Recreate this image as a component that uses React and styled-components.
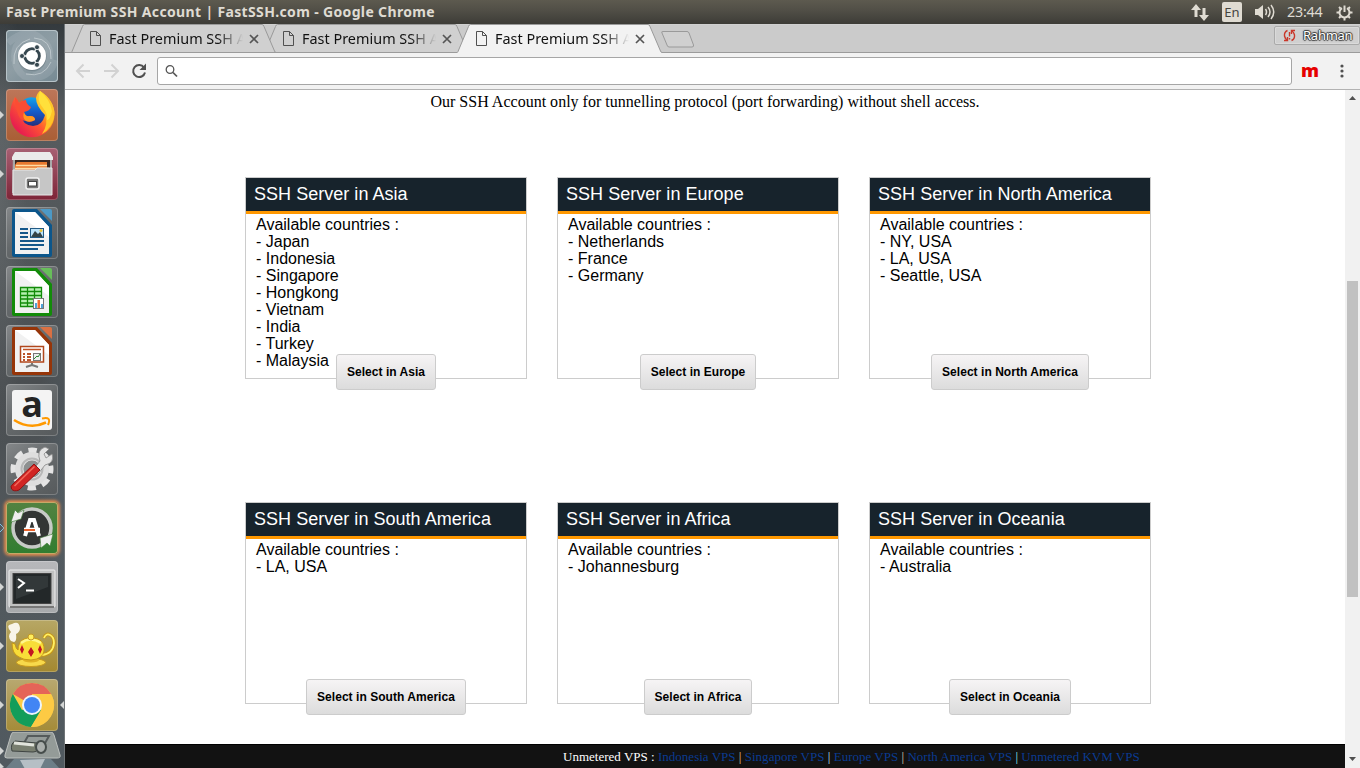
import React from 'react';
import styled, { createGlobalStyle } from 'styled-components';

const Global = createGlobalStyle`
  * { box-sizing: border-box; }
  body { margin: 0; overflow: hidden; background: #fff; }
`;
const Desktop = styled.div`
  width: 1360px; height: 768px; display: flex; flex-direction: column; overflow: hidden;
`;
const MenuBar = styled.header`
  height: 24px; flex: none; display: flex; align-items: center; padding: 0 7px 0 6px;
  background: linear-gradient(#5d5a4f, #504e46 45%, #3d3c37);
  color: #dfdbd2; font-family: "Noto Sans", sans-serif;
`;
const WindowTitle = styled.h1`
  margin: 0; flex: 1; font-size: 14px; line-height: 24px; font-weight: 700; white-space: nowrap;
  letter-spacing: ${p => p.$track}px;
`;
const Indicators = styled.div`display: flex; align-items: center;`;
const Lang = styled.span`
  width: 20px; height: 20px; margin: 0 13px 0 13px; border-radius: 2px; background: #dfdbd2; color: #45443f;
  font-size: 13px; line-height: 20px; text-align: center;
`;
const Clock = styled.span`
  width: 37px; margin: 0 12px 0 12px; font-size: 14.3px; line-height: 24px; white-space: nowrap; letter-spacing: -0.2px;
`;
const Body = styled.div`flex: 1; display: flex; min-height: 0;`;
const Launcher = styled.nav`
  width: 65px; flex: none; padding-top: 6px; display: flex; flex-direction: column; gap: 7px; overflow: hidden;
  border-right: 1px solid #6f7477;
  background:
    radial-gradient(ellipse at 0 25%, #777c7e55, transparent 30%),
    radial-gradient(ellipse at 100% 58%, #5c717f44, transparent 28%),
    linear-gradient(#343a3e, #575c5f 12%, #505558 34%, #494d50 50%, #52585c 67%, #515a60);
`;
const Slot = styled.div`
  display: grid; grid-template-columns: 6px 52px 6px; align-items: center; height: 52px; flex: none;
`;
const Tile = styled.div`
  width: 52px; height: 52px; border-radius: 4px; overflow: hidden; background: ${p => p.$bg};
  box-shadow: inset 0 0 0 1px ${p => p.$edge || '#ffffff38'}${p => p.$glow ? ', 0 0 3px 2px #d98a50' : ''};
  svg { display: block; }
`;
const Pip = styled.svg`display: block; width: 6px; height: 10px; justify-self: ${p => p.$end ? 'end' : 'start'};`;
const Folded = styled.svg`display: block; flex: none; margin-top: -6px;`;

const Browser = styled.main`flex: 1; min-width: 0; display: flex; flex-direction: column;`;
const TabStrip = styled.div`
  height: 29px; flex: none; display: flex; padding-left: 6px; background: #cbcbcb;
  box-shadow: inset 0 -1px #9b9b9b, inset 0 1px #d0d0d0;
`;
const TabBox = styled.div`
  position: relative; z-index: ${p => p.$z}; flex: none; width: 206px; height: 29px; margin-right: -13px;
  padding-left: 19px; display: flex; align-items: center;
`;
const TabShape = styled.svg`position: absolute; left: 0; top: 0; z-index: -1;`;
const TabTitle = styled.span`
  width: 134px; margin-left: 8px; overflow: hidden; white-space: nowrap; color: #111;
  font: 14.4px/28px "Noto Sans", sans-serif; letter-spacing: ${p => p.$track}px;
  mask-image: linear-gradient(90deg, #000 108px, transparent 134px);
`;
const CloseIcon = styled.svg`margin-left: 5px;`;
const NewTab = styled.svg`margin: 6px 0 0 10px; flex: none;`;
const Profile = styled.div`
  width: 86px; height: 19px; margin: 2px 0 0 auto; padding-left: 8px; display: flex; align-items: center; gap: 7px;
  border: 1px solid #aaa; border-radius: 2px; background: #d0d0d0; box-shadow: inset 0 0 0 1px #dadada;
`;
const ProfileName = styled.span`
  color: #fff; font: 13px/17px "Noto Sans", sans-serif; letter-spacing: -0.25px;
  text-shadow: 1px 0 1px #333, -1px 0 1px #333, 0 1px 1px #333, 0 -1px 1px #333;
`;
const Toolbar = styled.div`
  height: 37px; flex: none; display: flex; align-items: center; background: #f2f2f2; border-bottom: 1px solid #b2b2b2;
  padding-left: 10px;
`;
const Omnibox = styled.div`
  width: 1135px; height: 28px; margin-left: 8px; padding-left: 7px; display: flex; align-items: center;
  background: #fff; border: 1px solid #a6a6a6; border-radius: 3px;
`;
const Extension = styled.span`
  width: 18px; margin: 0 20px 2px 9px; color: #e60000; font: 900 18px/26px "Noto Sans", sans-serif; text-align: center;
`;
const Viewport = styled.div`flex: 1; min-height: 0; display: flex;`;
const Page = styled.div`flex: 1; display: flex; flex-direction: column; background: #fff;`;
const Intro = styled.p`
  margin: 0; padding: 3px 0 0; height: 87px; text-align: center; color: #000; font: 16px/18px "Liberation Serif", serif;
  letter-spacing: 0.01px;
`;
const Grid = styled.section`
  display: grid; grid-template-columns: repeat(3, 282px); grid-auto-rows: 202px; column-gap: 30px; row-gap: 123px;
  padding-left: 180px; flex: 1; font-family: "Liberation Sans", Arial, sans-serif;
`;
const Card = styled.article`
  border: 1px solid #ccc; display: flex; flex-direction: column; align-items: center; height: 202px;
`;
const CardTitle = styled.h2`
  align-self: stretch; flex: none; margin: 0; height: 36px; padding-left: 8px; background: #17232c;
  border-bottom: 3px solid #ff9800; color: #fff; font-size: 18px; font-weight: 400; line-height: 32px; letter-spacing: 0.03px;
`;
const Countries = styled.div`
  align-self: stretch; height: 140px; flex: none; padding: 2px 10px 0; font-size: 16px; line-height: 17px; color: #000;
`;
const SelectButton = styled.button`
  height: 36px; flex: none; padding: 0 10px; border: 1px solid #ccc; border-radius: 3px; position: relative;
  background: linear-gradient(#f6f4f5, #dcdcdc); color: #000; white-space: nowrap;
  font: bold 12px/34px "Liberation Sans", Arial, sans-serif; letter-spacing: 0.04px;
`;
const Footer = styled.footer`
  height: 24px; flex: none; padding: 0 0 0 498px; background: #121212; border-top: 1px solid #000;
  color: #fff; white-space: nowrap; font: 13px/23px "Liberation Serif", serif; letter-spacing: ${p => p.$track}px;
`;
const VpsLink = styled.a`color: #0b3b91;`;
const Divider = styled.span`color: ${p => p.$c};`;
const Scrollbar = styled.div`
  width: 15px; display: flex; flex-direction: column; align-items: center; background: #f1f1f1; padding: 6px 0 7px;
`;
const Thumb = styled.div`width: 11px; height: 316px; margin: 181px 0 auto; background: #c1c1c1;`;

const Pages = ({ color, dark, children }) => (
  <>
    <path d="M8 2H31L46 18V48Q46 50 44 50H8Q6 50 6 48V4Q6 2 8 2Z" fill={color} />
    <path d="M9 5H29L43 20V47H9Z" fill="#f1f1f1" /><path d="M9 5H29L43 20V30Z" fill="#fff" />
    <path d="M34 2H44Q46 2 46 4V14Z" fill={dark} opacity=".85" />
    {children}
  </>
);

const art = {
  ubuntu: <>
    <g fill="none" stroke="#d3dadd" strokeWidth="7" opacity=".16">
      <path d="M9 31Q6 7 28 8Q44 10 44 27Q43 43 27 46" /><path d="M2 13Q23-6 38 12M49 30Q43 52 18 46Q10 40 9 30" />
    </g>
    <g fill="none" stroke="#e4eaec" opacity=".5"><path d="M8 34Q6 14 24 9M28 8Q46 9 45 29M45 32Q38 48 20 44" /></g>
    <circle cx="26" cy="26.500" r="14.500" fill="#52626a" opacity=".35" />
    <circle cx="26" cy="26" r="14" fill="#fff" />
    <circle cx="26" cy="26" r="7.300" fill="none" stroke="#36474f" strokeWidth="3" />
    <g stroke="#fff" strokeWidth="1.300"><path d="M26 26L31 17M26 26L31 35M26 26H15" /></g>
    <circle cx="26" cy="26" r="5.700" fill="#fff" />
    <g fill="#36474f" stroke="#fff" strokeWidth=".8"><circle cx="16" cy="26" r="2.500" /><circle cx="31" cy="17.200" r="2.500" /><circle cx="31" cy="34.800" r="2.500" /></g>
  </>,
  firefox: <>
    <defs>
      <linearGradient id="ff1" x1=".85" y1=".1" x2=".15" y2=".8"><stop stopColor="#ffe02e" /><stop offset=".3" stopColor="#ffac17" /><stop offset=".6" stopColor="#ff5632" /><stop offset="1" stopColor="#e8204e" /></linearGradient>
      <linearGradient id="ff2" x1="0" y1="0" x2="0" y2="1"><stop stopColor="#14a4ea" /><stop offset=".5" stopColor="#145bcb" /><stop offset="1" stopColor="#24307c" /></linearGradient>
    </defs>
    <path d="M34 2Q48 11 48.500 25A22 22.500 0 0 1 4 26Q4 17 9 8Q12 11 13 14Q20 8 31 12Q30 6 34 2Z" fill="url(#ff1)" />
    <path d="M14 15Q20 6 30 9Q39 15 39 26Q36 37 27 37Q16 36 15 26Z" fill="url(#ff2)" />
    <path d="M9 8Q12 11 13 14Q16 11 20 11Q20 15 25 18Q24 22 18 23Q19 28 24 27Q29 27 29 31Q25 34 20 32Q14 32 12 25Q9 18 9 8Z" fill="#fb4c34" />
    <path d="M18 23Q19 28 24 27Q29 27 29 31Q24 34 20 32Q16 29 18 23Z" fill="#ff9921" />
    <path d="M34 2Q48 11 48.500 25Q47 39 36 45Q43 34 39 26Q30 17 30 9Q31 4 34 2Z" fill="#ffc428" />
    <path d="M34 2Q44 10 46 22Q44 31 41 31Q42 25 37 19Q30 11 34 2Z" fill="#ffe740" opacity=".8" />
  </>,
  files: <>
    <path d="M7 7L10 4H43L46 7V45H6Z" fill="#a9a9a9" /><path d="M6 9L9 4H44L47 9V12H6Z" fill="#eaeaea" />
    <path d="M9 12H44V23H9Z" fill="#39251f" /><path d="M11 14H41V23H9V17Z" fill="#e8792f" /><path d="M10 17.500H41M9 20.500H43" stroke="#ffdca4" strokeWidth="1.500" />
    <path d="M7 22H29L31 20H46V47H7Z" fill="#c6c6c6" stroke="#e7e7e7" />
    <rect x="20" y="30" width="13" height="11" rx="2" fill="#777" stroke="#f2f2f2" strokeWidth="1.500" /><rect x="22.500" y="33.500" width="8" height="4.500" fill="#fff" stroke="#444" />
  </>,
  writer: <Pages color="#0c568b" dark="#48a1d5">
    <path d="M14 22H22M14 26H22M14 30H22M14 34H38M14 38H38M14 42H32" stroke="#15578a" strokeWidth="2" />
    <rect x="24.500" y="21.500" width="13" height="9" fill="#bce3fa" stroke="#225a84" /><path d="M25 30L29 24L32 27L34 25L37 30Z" fill="#344345" /><circle cx="35" cy="23.500" r="1.500" fill="#eac438" />
  </Pages>,
  calc: <Pages color="#128b09" dark="#67cb57">
    <path d="M14 21H36V41H14Z" fill="#b7f0b0" /><path d="M14.500 21.500H35.500V40.500H14.500ZM14 25.500H36M14 29.500H36M14 33H36M14 37H36M21.500 21V41M28.500 21V41" fill="none" stroke="#128b09" strokeWidth="1.300" />
    <rect x="27.500" y="32.500" width="10" height="10" fill="#fff" stroke="#777" /><path d="M29 42V37H31V42M35 42V38H37V42" fill="#4fa3d9" /><path d="M31.500 42V34H34V42" fill="#f26c31" />
  </Pages>,
  impress: <Pages color="#963509" dark="#ef713b">
    <path d="M14.500 21.500H37.500V37H14.500Z" fill="#fff" stroke="#b1471c" strokeWidth="1.500" /><path d="M17 24.500H35" stroke="#c15124" strokeWidth="1.600" />
    <path d="M17 29H25M17 32H25M17 35H25" stroke="#bb552d" strokeWidth="1.800" strokeDasharray="2 2 5 0" /><rect x="27.500" y="28.500" width="7" height="7" fill="#eee" stroke="#777" /><path d="M28 34L31 31L32 32L34 29" stroke="#2e8934" fill="none" />
    <path d="M26 38V40L20 42M26 40L32 42" stroke="#777" strokeWidth="2" fill="none" />
  </Pages>,
  amazon: <>
    <rect x="6" y="6" width="40" height="40" rx="3" fill="#f4f4f4" />
    <text x="26" y="33" textAnchor="middle" fontFamily="Open Sans, sans-serif" fontSize="36" fontWeight="700" fill="#242424">a</text>
    <path d="M8 36Q24 46 40 38.500" fill="none" stroke="#ff9900" strokeWidth="2.500" /><path d="M36 34.500Q46 32 42 41" fill="none" stroke="#ff9900" strokeWidth="2" />
  </>,
  settings: <>
    <circle cx="26" cy="26" r="18" fill="none" stroke="#e4e4e4" strokeWidth="7" strokeDasharray="8 6.137" strokeDashoffset="4" />
    <circle cx="26" cy="26" r="12.500" fill="none" stroke="#dedede" strokeWidth="9" />
    <circle cx="26" cy="26" r="8.500" fill="#8d9090" /><circle cx="26" cy="26" r="10.500" fill="none" stroke="#b8b8b8" strokeWidth="2" />
    <path d="M27 27L34 18Q30 7 39 4L43 6L38 11L40 15L46 11Q49 20 39 22L32 31Z" fill="#e3e3e3" stroke="#888" strokeWidth=".8" />
    <path d="M7 41L28 21L34 27L13 47Q8 49 5.500 46Q4 43 7 41Z" fill="#d12523" stroke="#941010" /><path d="M8.500 43L28.500 23.500" stroke="#f3685a" strokeWidth="1.500" />
  </>,
  updater: <>
    <circle cx="26" cy="26" r="19" fill="#333634" stroke="#c7cac6" strokeWidth="3.500" />
    <path d="M5 20L9 8L12 11L18 8L15 17Z" fill="#eee" stroke="#3f7d35" strokeWidth=".6" /><path d="M34 36L47 32L44 44L41 41L35 46Z" fill="#eee" stroke="#3f7d35" strokeWidth=".6" />
    <path d="M19 34L24 18H28L33 34" fill="none" stroke="#fff" strokeWidth="4" /><path d="M18 28H34" stroke="#fff" strokeWidth="4.500" /><path d="M18 28H29" stroke="#ea642d" strokeWidth="2.200" />
  </>,
  terminal: <>
    <rect x="3" y="9" width="46" height="37" rx="1" fill="#c1c2c2" stroke="#eee" /><path d="M4 46H48" stroke="#777" strokeWidth="2" />
    <rect x="7" y="12.500" width="38" height="30" fill="#232829" stroke="#444" /><path d="M10 15H42V26L10 38Z" fill="#42484a" opacity=".5" />
    <path d="M12 18L18 22L12 27M20 29.500H28" stroke="#fff" strokeWidth="2" fill="none" />
  </>,
  teapot: <>
    <ellipse cx="25" cy="42.500" rx="14.500" ry="4" fill="#f7d94b" stroke="#c7991d" /><ellipse cx="25" cy="40" rx="8" ry="2.500" fill="#dfb025" />
    <path d="M38 18Q40 13 44 15Q48 17 48 23Q47 34 36 35" fill="none" stroke="#c79717" strokeWidth="3.600" /><path d="M38 18Q40 13 44 15Q48 17 48 23Q47 34 36 35" fill="none" stroke="#fff063" strokeWidth="1.800" />
    <path d="M6 23L9 24Q10 29 12 30Q12 22 18 19Q25 16 32 19Q39 22 38 31Q37 39 25 40Q17 40 13 37Q6 34 6 23Z" fill="#f8dd38" stroke="#c6971b" />
    <path d="M15 23Q24 16 35 23" fill="none" stroke="#fff78c" strokeWidth="2.500" /><circle cx="25" cy="17" r="3" fill="#ffef5c" stroke="#c59924" />
    <path d="M16 25L18 29.500L16 34L14 29.500ZM25 27L28 32L25 37L22 32ZM34 25L36 29.500L34 34L32 29.500Z" fill="#c31522" />
    <path d="M5 21Q1 16 5 12Q-1 5 6 4Q13 0 14 8Q14 12 10 14Q11 21 8 22Z" fill="#f8f4e8" />
  </>,
  chrome: <>
    <circle cx="26" cy="26" r="22" fill="#fdcb44" /><path d="M26 26L6.900 15A22 22 0 0 1 45.100 15H26Z" fill="#e56458" />
    <path d="M6.900 15A22 22 0 0 0 25 48L35 31L26 26L16 31Z" fill="#129d5a" /><path d="M26 15H45A22 22 0 0 1 25 48L36 31Z" fill="#fdca44" />
    <circle cx="26" cy="26" r="10" fill="#eef5fb" /><circle cx="26" cy="26" r="8" fill="#4285f4" />
  </>,
};

const glass = 'linear-gradient(145deg,#85888a,#65696b 48%,#565a5c)';
const apps = [
  { id: 'ubuntu', bg: 'linear-gradient(145deg,#82949d,#8e9da4 50%,#758993)', edge: '#b7c3c8' },
  { id: 'firefox', bg: 'linear-gradient(#bd7659,#a95e35)', open: 1 }, { id: 'files', bg: 'linear-gradient(#a76073,#7d2437)', open: 1 },
  { id: 'writer', bg: glass }, { id: 'calc', bg: glass }, { id: 'impress', bg: glass }, { id: 'amazon', bg: glass }, { id: 'settings', bg: glass },
  { id: 'updater', bg: 'linear-gradient(#528241,#317d30)', edge: '#c7a867', glow: 1, open: 2 },
  { id: 'terminal', bg: 'linear-gradient(#b7b8bb,#a8aaac)', open: 1 },
  { id: 'teapot', bg: 'linear-gradient(#b7a765,#a38830)', open: 1 }, { id: 'chrome', bg: 'linear-gradient(#b8a870,#a48b38)', open: 1, active: 1 },
];

function Tab({ active, z }) {
  return (
    <TabBox $z={z}>
      <TabShape width="206" height="29">
        <path d="M0 29L1 28L11.500 2.500Q12 1 13 1H191Q192.500 1 193 2.500L203.500 27Q204 28.500 205 28.500V29Z" fill={active ? '#f2f2f2' : '#d0d0d0'} />
        <path d="M0 28.500L1 27.500L11.500 2.500Q12 .5 13.500 .5H191Q192.500 .5 193 2.500L203.500 27Q204 28.500 205 28.500" fill="none" stroke="#9a9a9a" />
        {!active && <path d="M0 28.500H205" stroke="#9b9b9b" />}
      </TabShape>
      <svg width="11" height="15" viewBox="0 0 11 15" fill="none" stroke="#505050"><path d="M.5 .5H6.500L10.500 4.500V14.500H.5ZM6.500 .5V4.500H10.500" /></svg>
      <TabTitle $track={0.02}>Fast Premium SSH Account</TabTitle>
      <CloseIcon width="12" height="12" stroke="#555" strokeWidth="1.700"><path d="M2 2L10 10M10 2L2 10" /></CloseIcon>
    </TabBox>
  );
}

const regions = [
  ['Asia', ['Japan', 'Indonesia', 'Singapore', 'Hongkong', 'Vietnam', 'India', 'Turkey', 'Malaysia']],
  ['Europe', ['Netherlands', 'France', 'Germany']],
  ['North America', ['NY, USA', 'LA, USA', 'Seattle, USA']],
  ['South America', ['LA, USA']], ['Africa', ['Johannesburg']], ['Oceania', ['Australia']],
];
const links = [['Indonesia VPS', '#efc78d'], ['Singapore VPS', '#b4e5f4'], ['Europe VPS', '#ddc9b9'], ['North America VPS', '#8ce8f4'], ['Unmetered KVM VPS']];

export default function App() {
  return (
    <Desktop>
      <Global />
      <MenuBar>
        <WindowTitle $track={0.35}>Fast Premium SSH Account | FastSSH.com - Google Chrome</WindowTitle>
        <Indicators>
          <svg width="18" height="17" viewBox="0 0 18 17" fill="#dfdbd2"><path d="M5 0L10 6H6.500V13H3.500V6H0ZM13 17L8 11H11.500V4H14.500V11H18Z" /></svg>
          <Lang>En</Lang>
          <svg width="20" height="16" viewBox="0 0 20 16" fill="none" stroke="#dfdbd2" strokeWidth="1.500"><path d="M0 5H3L8 1V15L3 11H0Z" fill="#dfdbd2" stroke="none" /><path d="M10.500 5Q12.500 8 10.500 11M13 3Q17 8 13 13M16 1Q21.500 8 16 15" /></svg>
          <Clock>23:44</Clock>
          <svg width="17" height="17" viewBox="0 0 17 17" fill="none" stroke="#dfdbd2"><path d="M6 4.200A5 5 0 1 0 11 4.200" strokeWidth="2" /><path d="M8.500 1.500V8" strokeWidth="2" /><path d="M.5 8.500H3M14 8.500H16.500M3 14L4.500 12.500M14 14L12.500 12.500M8.500 14V16.500M3 3L4.500 4.500M14 3L12.500 4.500" strokeWidth="2" /></svg>
        </Indicators>
      </MenuBar>
      <Body>
        <Launcher>
          {apps.map(a => (
            <Slot key={a.id}>
              <Pip viewBox="0 0 6 10">{a.open && <path d="M0 1L4 5L0 9" fill={a.open === 2 ? 'none' : '#d3d5d4'} stroke={a.open === 2 ? '#77c2e8' : 'none'} />}</Pip>
              <Tile $bg={a.bg} $edge={a.edge} $glow={a.glow}><svg width="52" height="52" viewBox="0 0 52 52">{art[a.id]}</svg></Tile>
              <Pip $end viewBox="0 0 6 10">{a.active && <path d="M6 1L2 5L6 9Z" fill="#d3d5d4" />}</Pip>
            </Slot>
          ))}
          <Folded width="65" height="37" viewBox="0 0 65 37">
            <path d="M14 0H51Q53 0 54 3L60 23Q61 26 57 26H7Q4 26 5 23L11 3Q12 0 14 0Z" fill="#949b98" stroke="#bdc1bf" />
            <path d="M24 11L28 4H49L44 13" fill="none" stroke="#555b5b" strokeWidth="2" />
            <path d="M15 9L37 11Q40 20 33 20L12 19Q10 12 15 9Z" fill="#787e6f" stroke="#3f4543" /><path d="M14 11L34 13" stroke="#e1e4dc" strokeWidth="3" />
            <ellipse cx="41" cy="15" rx="5" ry="6" fill="#a9aeab" stroke="#464d4b" strokeWidth="2" />
            <path d="M14 27H51L60 37H5Z" fill="#6d7e87" /><path d="M20 28L45 27L40 37H25Z" fill="#d5dce0" opacity=".7" />
            <path d="M0 15L4 19L0 23ZM0 31L4 35L0 37Z" fill="#d3d5d4" />
          </Folded>
        </Launcher>
        <Browser>
          <TabStrip>
            <Tab z={2} /><Tab z={1} /><Tab z={3} active />
            <NewTab width="36" height="18"><path d="M3 1.500H27Q28.500 1.500 29 3L33.500 15Q34 17 32 17H9Q7.500 17 7 15L2 3Q1 1.500 3 1.500Z" fill="#d0d0d0" stroke="#9a9a9a" /></NewTab>
            <Profile>
              <svg width="13" height="13" viewBox="0 0 13 13" fill="none" stroke="#c9372a" strokeWidth="1.400"><path d="M4.500 1.500Q1 3 1.500 7Q2 9.500 4 11M8.500 11.500Q12 10 11.500 6Q11 3.500 9 2" /><path d="M1 11.500H4.500V8M12 1.500H8.500V5M6.500 3V7.500M6.500 9V10.500" /></svg>
              <ProfileName>Rahman</ProfileName>
            </Profile>
          </TabStrip>
          <Toolbar>
            <svg width="74" height="20" viewBox="0 0 74 20" fill="none" strokeWidth="2">
              <path d="M15 10H2.500M8.500 3.500L2 10L8.500 16.500M29 10H42M36.500 3.500L43 10L36.500 16.500" stroke="#d2d2d2" />
              <path d="M69 6.500A6 6 0 1 0 70 11.500" stroke="#505050" /><path d="M71 2.500V9H64.500Z" fill="#505050" />
            </svg>
            <Omnibox><svg width="14" height="14" fill="none" stroke="#555" strokeWidth="1.300"><circle cx="5" cy="5.500" r="3.800" /><path d="M8 8.500L12 12.500" strokeWidth="1.700" /></svg></Omnibox>
            <Extension>m</Extension>
            <svg width="6" height="16" fill="#505050"><circle cx="3" cy="3" r="1.600" /><circle cx="3" cy="8" r="1.600" /><circle cx="3" cy="13" r="1.600" /></svg>
          </Toolbar>
          <Viewport>
            <Page>
              <Intro>Our SSH Account only for tunnelling protocol (port forwarding) without shell access.</Intro>
              <Grid>
                {regions.map(([name, list]) => (
                  <Card key={name}>
                    <CardTitle>SSH Server in {name}</CardTitle>
                    <Countries>Available countries :{list.map(c => <div key={c}>- {c}</div>)}</Countries>
                    <SelectButton>Select in {name}</SelectButton>
                  </Card>
                ))}
              </Grid>
              <Footer $track={0.015}>Unmetered VPS : {links.map(([t, c]) => <React.Fragment key={t}><VpsLink>{t}</VpsLink>{c && <Divider $c={c}> | </Divider>}</React.Fragment>)}</Footer>
            </Page>
            <Scrollbar>
              <svg width="7" height="4" fill="#505050"><path d="M0 4L3.500 0L7 4Z" /></svg>
              <Thumb />
              <svg width="7" height="4" fill="#505050"><path d="M0 0L3.500 4L7 0Z" /></svg>
            </Scrollbar>
          </Viewport>
        </Browser>
      </Body>
    </Desktop>
  );
}
